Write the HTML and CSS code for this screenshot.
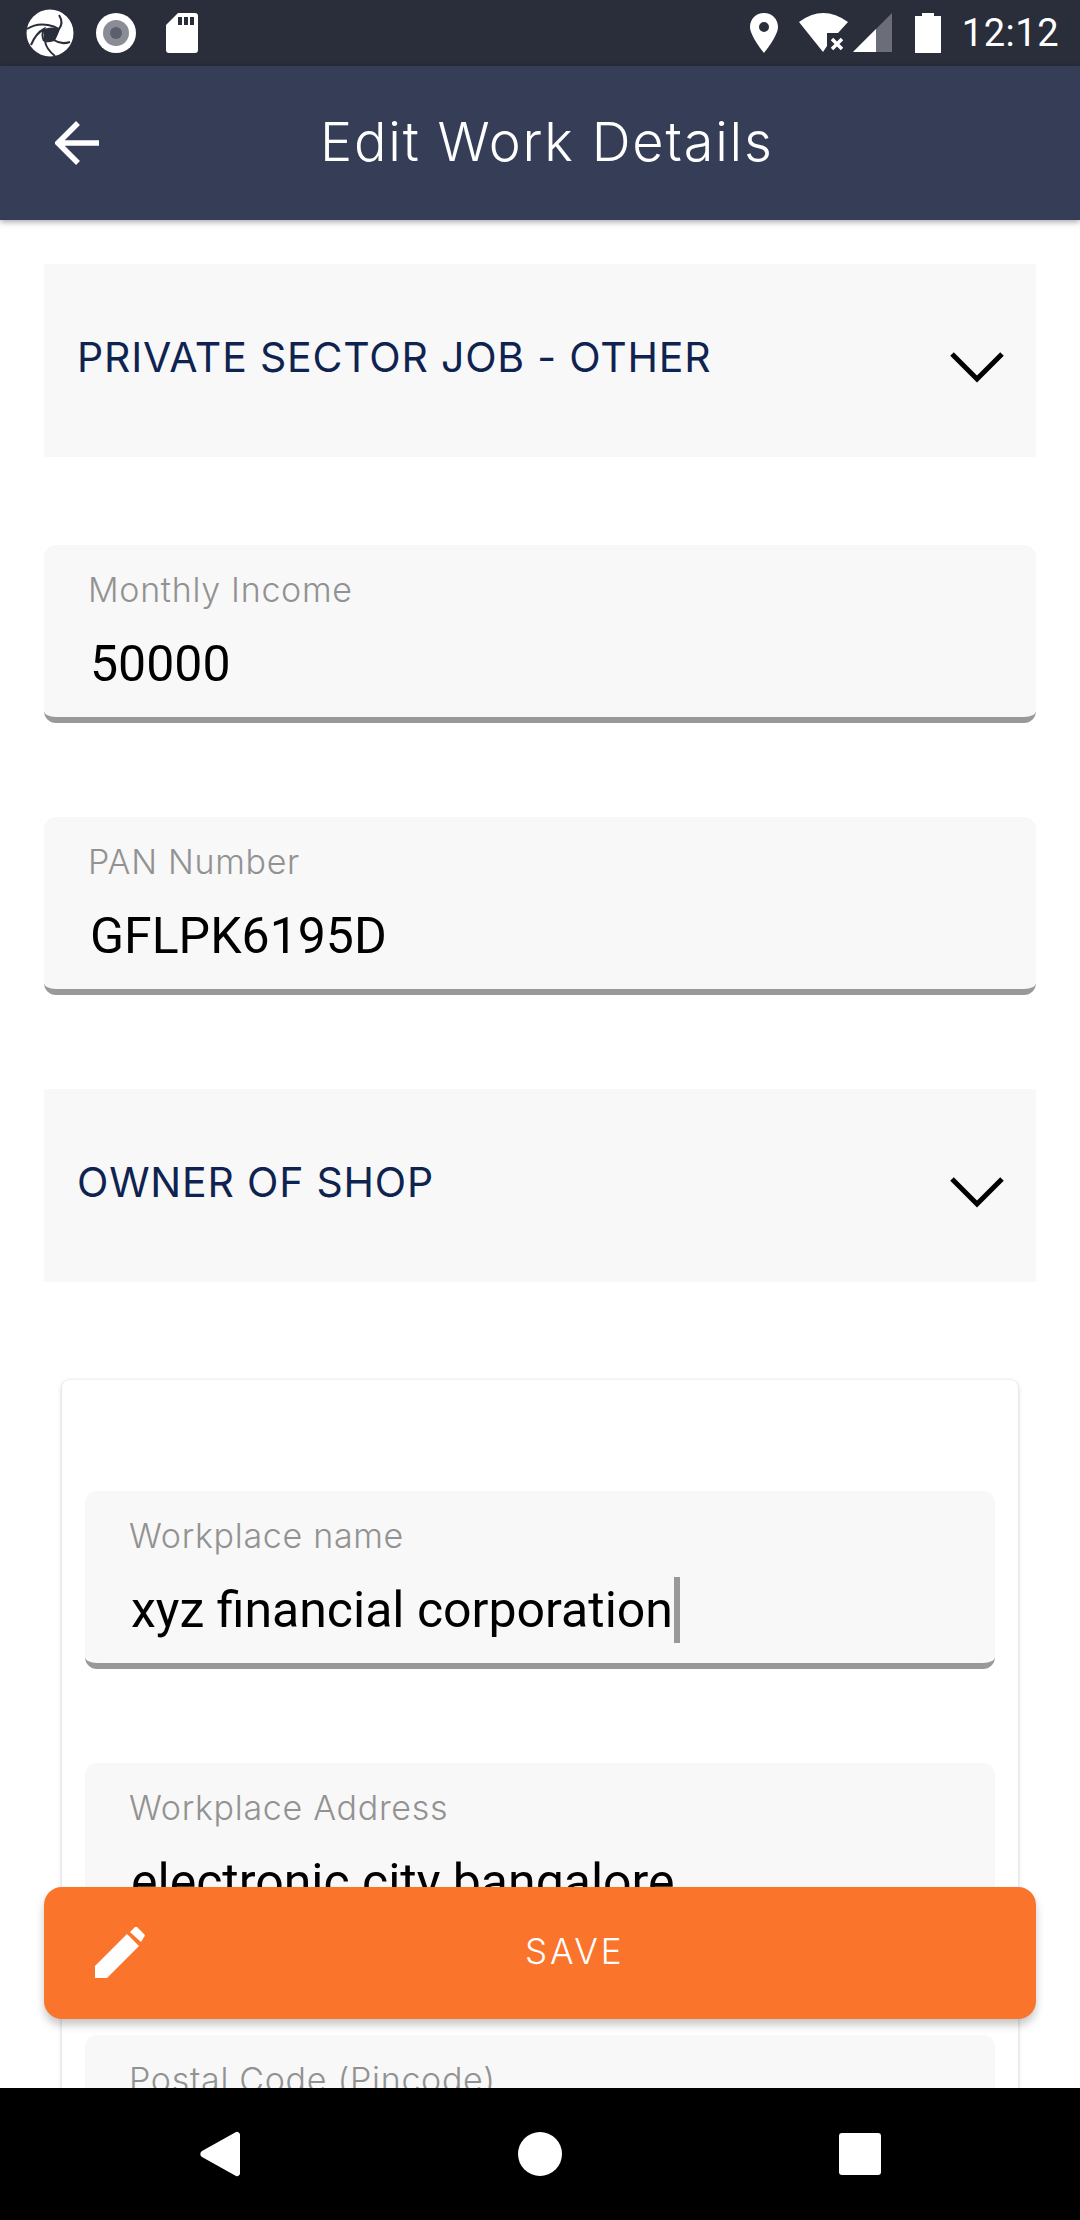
FILE: index.html
```html
<!DOCTYPE html>
<html lang="en">
<head>
<meta charset="utf-8">
<title>Edit Work Details</title>
<link rel="stylesheet" href="styles.css">
</head>
<body>
<div class="screen">
  <div class="statusbar">
    <div class="status-left">
      <svg class="ico-logo" width="48" height="48" viewBox="0 0 48 48"><circle cx="24" cy="24" r="23.500" fill="#fff"/><path d="M18 20Q26 17 33 20L28 31Q23 33 18 31Z" fill="#2a2d3a"/><path d="M1 20Q10 14 22 16Q28 17 33 20Q38 14 33 6 M33 20Q30 28 28 31Q35 36 44 33 M28 31Q22 33 19 32Q20 40 29 47 M18 32Q15 26 18 20Q10 24 5 36" fill="none" stroke="#2a2d3a" stroke-width="2"/></svg>
      <svg class="ico-rec" width="40" height="40" viewBox="0 0 40 40"><circle cx="20" cy="20" r="20" fill="#fff"/><circle cx="20" cy="20" r="13" fill="#8a8c96"/><circle cx="20" cy="20" r="6" fill="#5d606c"/></svg>
      <svg class="ico-sd" width="32" height="40" viewBox="0 0 32 40"><path d="M12 0H29a3 3 0 0 1 3 3V37a3 3 0 0 1-3 3H3a3 3 0 0 1-3-3V12Z" fill="#fff"/><path d="M12 4h4v8h-4ZM18 4h4v8h-4ZM24 4h4v8h-4Z" fill="#2a2d3a"/></svg>
    </div>
    <div class="status-right">
      <svg class="ico-pin" width="28" height="40" viewBox="0 0 28 40"><path fill-rule="evenodd" d="M14 0C6 0 0 6 0 14C0 23 14 40 14 40S28 23 28 14C28 6 22 0 14 0ZM14 9a5 5 0 1 1 0 10a5 5 0 0 1 0-10Z" fill="#fff"/></svg>
      <svg class="ico-wifi" width="50" height="40" viewBox="0 0 50 40"><path d="M0 9Q24-9 49 9L39 20H28V33L24 39Z" fill="#fff"/><path d="M33 26l10 10M43 26l-10 10" stroke="#fff" stroke-width="3.500"/></svg>
      <svg class="ico-signal" width="39" height="40" viewBox="0 0 39 40"><path d="M0 39L39 0V39Z" fill="#6b6d78"/><path d="M0 39L23 16V39Z" fill="#fff"/></svg>
      <svg class="ico-batt" width="26" height="40" viewBox="0 0 26 40"><path d="M7 0H19V3H26V40H0V3H7Z" fill="#fff"/></svg>
      <span class="clock">12:12</span>
    </div>
  </div>

  <header class="appbar">
    <svg class="back" width="46" height="46" viewBox="0 0 46 46"><path d="M3 23H44M23 3L3 23L23 43" fill="none" stroke="#fff" stroke-width="5.500"/></svg>
    <h1 class="title">Edit Work Details</h1>
  </header>

  <main class="content">
    <div class="select select-first">
      <span class="select-text">PRIVATE SECTOR JOB - OTHER</span>
      <svg class="chev" width="56" height="32" viewBox="0 0 56 32"><path d="M3 3L28 28L53 3" fill="none" stroke="#000" stroke-width="5"/></svg>
    </div>

    <div class="field">
      <div class="label">Monthly Income</div>
      <div class="value">50000</div>
    </div>
    <div class="field">
      <div class="label">PAN Number</div>
      <div class="value">GFLPK6195D</div>
    </div>

    <div class="select select-second">
      <span class="select-text">OWNER OF SHOP</span>
      <svg class="chev" width="56" height="32" viewBox="0 0 56 32"><path d="M3 3L28 28L53 3" fill="none" stroke="#000" stroke-width="5"/></svg>
    </div>

    <section class="card">
      <div class="field">
        <div class="label">Workplace name</div>
        <div class="value">xyz financial corporation<span class="caret"></span></div>
      </div>
      <div class="field">
        <div class="label">Workplace Address</div>
        <div class="value">electronic city bangalore</div>
      </div>
      <div class="field">
        <div class="label">Postal Code (Pincode)</div>
        <div class="value"></div>
      </div>
    </section>

    <button class="save" type="button">
      <svg class="pencil" width="52" height="52" viewBox="0 0 52 52"><path d="M1 39L33 7L45 19L13 51H1Z" fill="#fff"/><path d="M36 5L41 0a2 2 0 0 1 2 0L50 7a2 2 0 0 1 0 3L47 15Z" fill="#fff"/></svg>
      <span class="save-text">SAVE</span>
    </button>
  </main>

  <nav class="navbar">
    <svg width="40" height="46" viewBox="0 0 40 46"><path d="M36 1a3 3 0 0 1 4 3V42a3 3 0 0 1-4 3L2 26a3.500 3.500 0 0 1 0-6Z" fill="#fff"/></svg>
    <svg width="44" height="44" viewBox="0 0 44 44"><circle cx="22" cy="22" r="22" fill="#fff"/></svg>
    <svg width="42" height="42" viewBox="0 0 42 42"><rect width="42" height="42" rx="3" fill="#fff"/></svg>
  </nav>
</div>
</body>
</html>
```
FILE: styles.css
```css
* { box-sizing: border-box; }
html, body { margin: 0; padding: 0; background: #fff; }
.screen {
  width: 1080px;
  height: 2220px;
  display: flex;
  flex-direction: column;
  overflow: hidden;
  font-family: "Roboto", sans-serif;
}
.statusbar {
  height: 66px;
  flex: none;
  background: #2a2d3a;
  display: flex;
  align-items: center;
  justify-content: space-between;
  padding: 0 21px 0 26px;
}
.status-left { display: flex; align-items: center; }
.ico-rec { margin-left: 22px; }
.ico-sd { margin-left: 30px; }
.status-right { display: flex; align-items: center; }
.ico-wifi { margin-left: 21px; }
.ico-signal { margin-left: 4px; }
.ico-batt { margin-left: 23px; }
.clock {
  color: #fff;
  font-size: 38px;
  margin-left: 21px;
  letter-spacing: 0.5px;
}
.appbar {
  height: 154px;
  flex: none;
  background: #363d56;
  display: flex;
  align-items: center;
  position: relative;
  z-index: 2;
  padding-left: 55px;
  box-shadow: 0 2px 6px rgba(0,0,0,.35);
}
.back { flex: none; }
.title {
  margin: -4px 0 0 219px;
  font-family: "Inter", sans-serif;
  font-weight: 300;
  font-size: 54px;
  color: #fff;
  letter-spacing: 1.8px;
}
.content {
  flex: 1;
  position: relative;
  overflow: hidden;
  padding: 44px 44px 0;
  min-height: 0;
}
.select {
  height: 193px;
  background: #f8f8f8;
  display: flex;
  justify-content: space-between;
  align-items: center;
  padding: 0 31px 0 33px;
}
.select-text {
  font-family: "Inter", sans-serif;
  font-size: 41px;
  color: #0f2350;
  letter-spacing: 0.8px;
  margin-top: -8px;
}
.chev { margin-top: 12px; }
.select-first { margin-bottom: 88px; }
.select-second { margin-top: 94px; }
.field {
  height: 178px;
  background: #f8f8f8;
  border-radius: 12px;
  border-bottom: 6px solid #999;
  padding: 23px 0 0 44px;
  margin-bottom: 94px;
}
.label {
  font-family: "Inter", sans-serif;
  font-weight: 300;
  font-size: 34px;
  line-height: 44px;
  color: #929292;
  letter-spacing: 0.7px;
}
.value {
  font-family: "Roboto", sans-serif;
  font-size: 50px;
  line-height: 60px;
  color: #000;
  margin: 22px 0 0 2px;
  display: flex;
  align-items: center;
}
.caret {
  display: inline-block;
  width: 6px;
  height: 66px;
  margin-block: -3px;
  background: #999;
  margin-left: 1px;
}
.card {
  margin: 98px 18px 0;
  background: #fff;
  border-radius: 8px;
  box-shadow: 0 1px 4px rgba(0,0,0,.22);
  padding: 111px 23px 0;
  height: 1000px;
}
.save {
  position: absolute;
  left: 44px;
  top: 1667px;
  width: 992px;
  height: 132px;
  border: 0;
  border-radius: 18px;
  background: #fa742c;
  box-shadow: 0 6px 8px rgba(0,0,0,.22);
  display: flex;
  align-items: center;
  padding: 0 0 4px 50px;
}
.pencil { flex: none; margin-top: 4px; }
.save-text {
  font-family: "Inter", sans-serif;
  font-weight: 300;
  font-size: 35px;
  color: #fff;
  letter-spacing: 3px;
  margin-left: 379px;
}
.navbar {
  height: 132px;
  flex: none;
  background: #000;
  position: relative;
  z-index: 3;
  display: flex;
  align-items: center;
  justify-content: space-between;
  padding: 0 199px 0 200px;
}
```
